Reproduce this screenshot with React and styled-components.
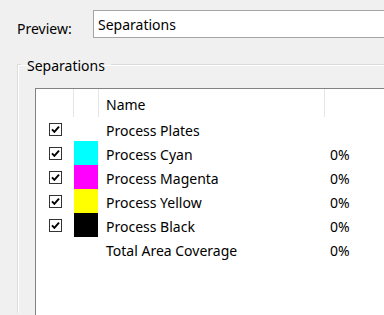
import React from 'react';
import styled, { createGlobalStyle } from 'styled-components';

const GlobalStyle = createGlobalStyle`
  html, body {
    margin: 0;
    padding: 0;
    background: #f0f0f0;
    overflow: hidden;
  }
  body {
    font-family: "Noto Sans", "Open Sans", sans-serif;
    font-size: 14px;
    color: #000;
  }
`;

const inks = [
  { name: 'Process Plates', checked: true },
  { name: 'Process Cyan', checked: true, color: '#00ffff', coverage: '0%' },
  { name: 'Process Magenta', checked: true, color: '#ff00ff', coverage: '0%' },
  { name: 'Process Yellow', checked: true, color: '#ffff00', coverage: '0%' },
  { name: 'Process Black', checked: true, color: '#000000', coverage: '0%' },
  { name: 'Total Area Coverage', coverage: '0%' }
];

const Page = styled.div`
  width: 384px;
  height: 315px;
  overflow: hidden;
  padding-top: 10px;
  box-sizing: border-box;
`;

const PreviewRow = styled.div`
  display: flex;
  align-items: flex-start;
  height: 28px;
`;

const Label = styled.label`
  width: 76px;
  padding-left: 17px;
  padding-top: 10px;
  line-height: 18px;
  flex: none;
`;

const Field = styled.div`
  flex: none;
  width: 320px;
  height: 28px;
  box-sizing: border-box;
  background: #fff;
  border: 1px solid #a5a5a5;
  padding: 5px 4px 0;
  line-height: 18px;
`;

const Group = styled.fieldset`
  margin: 15px 0 0 17px;
  padding: 0;
  width: 420px;
  height: 260px;
  box-sizing: border-box;
  border: 1px solid #dcdcdc;
  border-right: none;
  border-bottom: none;
  box-shadow: inset 1px 1px 0 #fff;
`;

const Legend = styled.legend`
  margin-left: 3px;
  padding: 4px 6px 0 6px;
  line-height: 18px;
`;

const List = styled.div`
  margin: 13px 0 0 17px;
  width: 400px;
  height: 240px;
  box-sizing: border-box;
  background: #fff;
  border: 1px solid #828282;
  border-right: none;
  border-bottom: none;
  display: grid;
  grid-template-columns: 37px 25px 226px 1fr;
  grid-auto-rows: 24px;
  grid-template-rows: 28px;
  align-items: center;
`;

const HeadCell = styled.div`
  align-self: stretch;
  display: flex;
  align-items: center;
  padding: 2px 0 0 7px;
  border-left: ${p => (p.$first ? 'none' : '1px solid #e5e5e5')};
`;

const CheckCell = styled.div`
  display: flex;
  justify-content: center;
  padding-left: 2px;
`;

const Box = styled.span`
  width: 13px;
  height: 13px;
  box-sizing: border-box;
  border: 1px solid #333;
  background: #fff;
  display: flex;
  align-items: center;
  justify-content: center;
`;

const Swatch = styled.div`
  align-self: stretch;
  margin-left: 1px;
  background: ${p => p.$color || 'transparent'};
`;

const Name = styled.div`
  padding: 3px 0 0 8px;
  white-space: nowrap;
`;

const Coverage = styled.div`
  padding: 3px 0 0 6px;
`;

const Check = () => (
  <Box>
    <svg width="9" height="9" viewBox="0 0 9 9">
      <path d="M1 4.3 L3.4 6.8 L8 1.6" fill="none" stroke="#000" strokeWidth="1.9" />
    </svg>
  </Box>
);

export default function App() {
  return (
    <>
      <GlobalStyle />
      <Page>
        <PreviewRow>
          <Label>Preview:</Label>
          <Field>Separations</Field>
        </PreviewRow>
        <Group>
          <Legend>Separations</Legend>
          <List>
            <HeadCell $first />
            <HeadCell />
            <HeadCell>Name</HeadCell>
            <HeadCell />
            {inks.map(ink => (
              <React.Fragment key={ink.name}>
                <CheckCell>{ink.checked && <Check />}</CheckCell>
                <Swatch $color={ink.color} />
                <Name>{ink.name}</Name>
                <Coverage>{ink.coverage}</Coverage>
              </React.Fragment>
            ))}
          </List>
        </Group>
      </Page>
    </>
  );
}
